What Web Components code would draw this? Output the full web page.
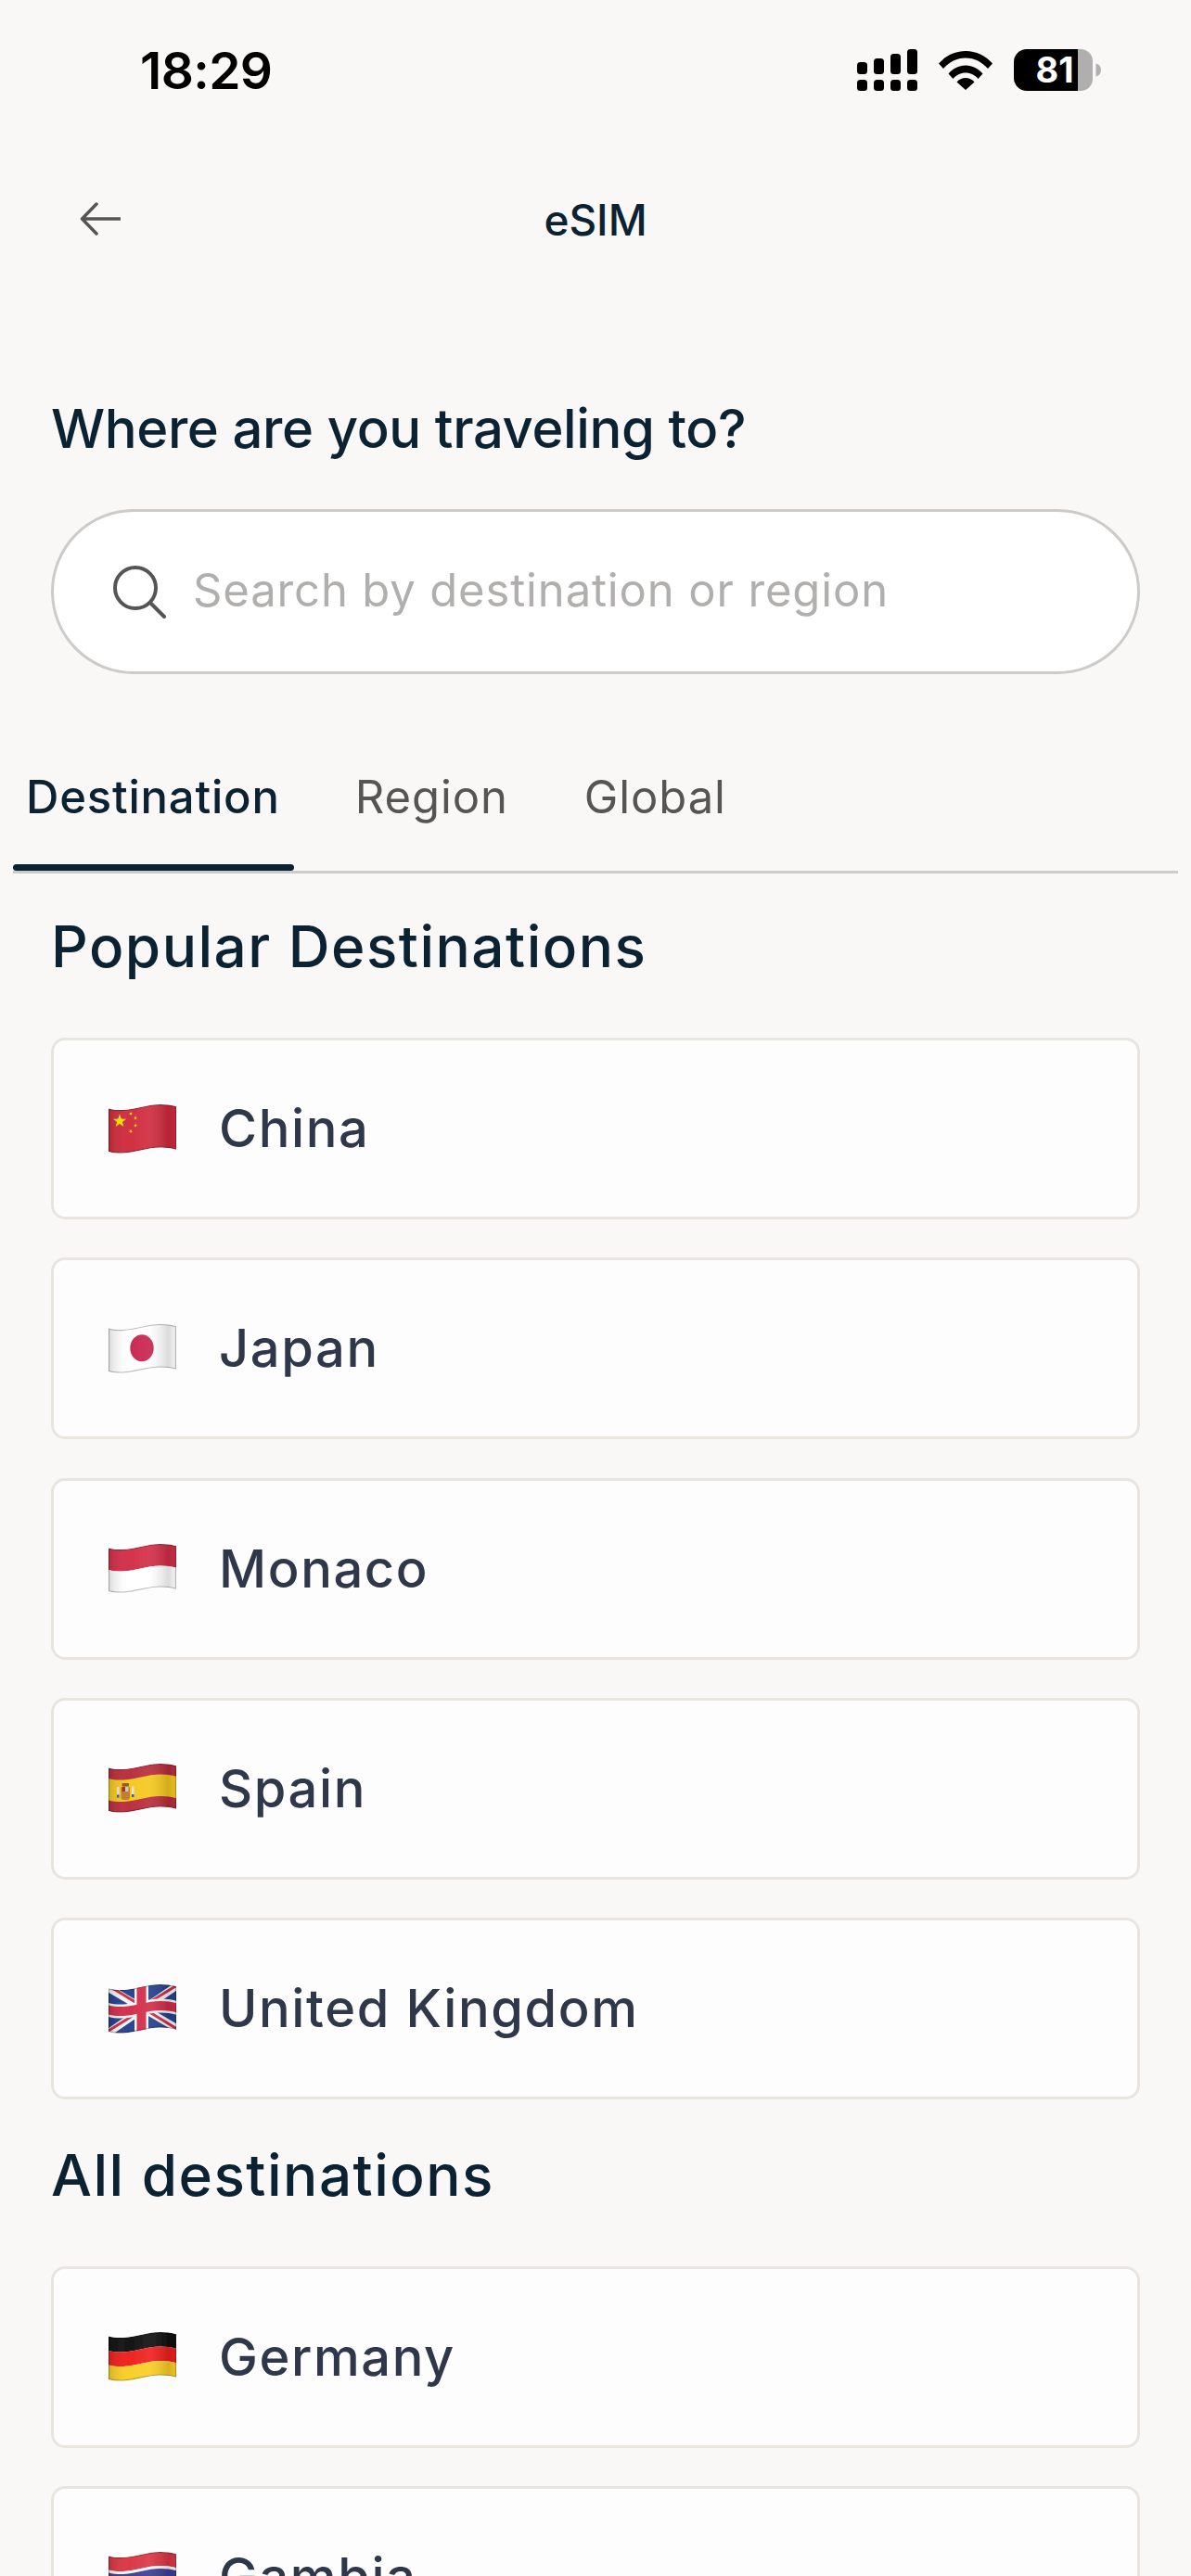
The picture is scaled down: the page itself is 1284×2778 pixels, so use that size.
<!DOCTYPE html>
<html>
<head>
<meta charset="utf-8">
<style>
  html, body { margin: 0; padding: 0; background: #f9f8f6; }
  body { width: 1284px; height: 2778px; overflow: hidden; font-family: Inter, "Liberation Sans", sans-serif; }
</style>
</head>
<body>
<esim-screen>
  <status-bar></status-bar>
  <nav-bar title="eSIM"></nav-bar>
  <search-box heading="Where are you traveling to?" placeholder="Search by destination or region"></search-box>
  <tab-strip></tab-strip>
  <destination-list heading="Popular Destinations">
    <destination-row code="cn" name="China"></destination-row>
    <destination-row code="jp" name="Japan"></destination-row>
    <destination-row code="mc" name="Monaco"></destination-row>
    <destination-row code="es" name="Spain"></destination-row>
    <destination-row code="gb" name="United Kingdom"></destination-row>
  </destination-list>
  <destination-list heading="All destinations" class="all">
    <destination-row code="de" name="Germany"></destination-row>
    <destination-row code="gm" name="Gambia"></destination-row>
  </destination-list>
</esim-screen>

<script>
class EsimScreen extends HTMLElement {
  constructor() {
    super();
    this.attachShadow({ mode: 'open' }).innerHTML = `
      <style>
        :host { display: flex; flex-direction: column; height: 2778px; overflow: hidden; background: #f9f8f6; }
        ::slotted(*) { flex: none; }
      </style>
      <slot></slot>`;
  }
}

class StatusBar extends HTMLElement {
  constructor() {
    super();
    this.attachShadow({ mode: 'open' }).innerHTML = `
      <style>
        :host { display: flex; align-items: center; justify-content: space-between; height: 151px; padding: 0 97px 0 151px; box-sizing: border-box; }
        .time { font: 600 55px Inter, sans-serif; color: #000; letter-spacing: -0.6px; }
        .icons { display: flex; align-items: center; gap: 23px; }
        svg { display: block; }
        text { font: 700 38px Inter, sans-serif; fill: #fff; }
      </style>
      <span class="time">18:29</span>
      <div class="icons">
        <svg width="65" height="45" viewBox="0 0 65 45" fill="#000">
          <rect x="0" y="33" width="11" height="12" rx="3.5"/><rect x="18" y="33" width="11" height="12" rx="3.5"/>
          <rect x="36" y="33" width="11" height="12" rx="3.5"/><rect x="54" y="33" width="11" height="12" rx="3.5"/>
          <rect x="0" y="14" width="11" height="13" rx="3.5"/><rect x="18" y="10" width="11" height="17" rx="3.5"/>
          <rect x="36" y="5" width="11" height="22" rx="3.5"/><rect x="54" y="0" width="11" height="27" rx="3.5"/>
        </svg>
        <svg width="58" height="43" viewBox="0 0 58 43" fill="#000">
          <path d="M0 14.5C7.5 6 17.8 1 29 1s21.5 5 29 13.5l-5 5.5C46.700 12.800 38.300 8.500 29 8.500S11.300 12.800 5 20z"/>
          <path d="M10.500 25.500C15.200 20 21.700 16.500 29 16.500s13.800 3.500 18.500 9l-5 5.500C39.200 27 34.400 24.500 29 24.500S18.800 27 15.500 31z"/>
          <path d="M19.500 34.500C22 31.700 25.300 30 29 30s7 1.700 9.500 4.500L29 43z"/>
        </svg>
        <svg width="94" height="45" viewBox="0 0 94 45">
          <path d="M14 0H69V45H14A14 14 0 0 1 0 31V14A14 14 0 0 1 14 0Z" fill="#000"/>
          <path d="M69 0H72A13 13 0 0 1 85 13V32A13 13 0 0 1 72 45H69Z" fill="#b0aeae"/>
          <path d="M88.500 15.500C92 16.500 94 19 94 22.500S92 28.500 88.500 29.500Z" fill="#b0aeae"/>
          <text x="44" y="36" text-anchor="middle">81</text>
        </svg>
      </div>`;
  }
}

class NavBar extends HTMLElement {
  constructor() {
    super();
    this.attachShadow({ mode: 'open' }).innerHTML = `
      <style>
        :host { display: flex; align-items: center; justify-content: center; position: relative; height: 172px; }
        svg { position: absolute; left: 86px; top: 67px; }
        span { font: 500 46px Inter, sans-serif; color: #0b2233; }
      </style>
      <svg width="44" height="36" viewBox="0 0 44 36" fill="none" stroke="#555" stroke-width="3.500" stroke-linecap="round" stroke-linejoin="round">
        <path d="M43 18H3M18 2L2.500 18L18 34"/>
      </svg>
      <span>${this.getAttribute('title')}</span>`;
  }
}

class SearchBox extends HTMLElement {
  constructor() {
    super();
    this.attachShadow({ mode: 'open' }).innerHTML = `
      <style>
        :host { display: block; padding: 103px 55px 0; }
        h2 { margin: 0 0 50px; font: 500 58px/73px Inter, sans-serif; color: #0b2233; letter-spacing: -0.4px; }
        .field { display: flex; align-items: center; gap: 29px; height: 178px; box-sizing: border-box; padding-left: 63px; border: 3px solid #cdcbca; border-radius: 89px; background: #fff; }
        svg { flex: none; }
        span { font: 400 49px Inter, sans-serif; color: #b0afad; letter-spacing: 0.85px; margin-top: -3px; }
      </style>
      <h2>${this.getAttribute('heading')}</h2>
      <div class="field">
        <svg width="58" height="58" viewBox="0 0 58 58" fill="none" stroke="#555" stroke-width="4" stroke-linecap="round">
          <circle cx="25" cy="25" r="22"/><path d="M41 41L56 56"/>
        </svg>
        <span>${this.getAttribute('placeholder')}</span>
      </div>`;
  }
}

class TabStrip extends HTMLElement {
  constructor() {
    super();
    this.attachShadow({ mode: 'open' }).innerHTML = `
      <style>
        :host { display: flex; margin: 0 14px; height: 215px; box-sizing: border-box; }
        .line { display: flex; align-items: flex-end; width: 100%; height: 215px; border-bottom: 3px solid #cdcbca; box-sizing: border-box; gap: 50px; }
        .tab { position: relative; height: 109px; padding: 0 16px; font: 400 49px Inter, sans-serif; color: #555; letter-spacing: 0.9px; }
        .tab.on { color: #0b2233; font-weight: 500; letter-spacing: 0.8px; padding: 0 15px 0 14px; }
        .tab.on::after { content: ""; position: absolute; left: 0; right: 0; bottom: 0; height: 7px; border-radius: 4px; background: #0b2233; }
      </style>
      <div class="line">
        <div class="tab on">Destination</div>
        <div class="tab">Region</div>
        <div class="tab">Global</div>
      </div>`;
  }
}

class DestinationList extends HTMLElement {
  constructor() {
    super();
    this.attachShadow({ mode: 'open' }).innerHTML = `
      <style>
        :host { display: block; padding: 0 55px; }
        h3 { margin: 0; height: 177px; box-sizing: border-box; padding-top: 42px; font: 500 62px/73px Inter, sans-serif; color: #0b2233; letter-spacing: 1.5px; }
        :host(.all) h3 { height: 179.500px; padding-top: 45px; }
        .rows { display: flex; flex-direction: column; gap: 41.300px; }
      </style>
      <h3>${this.getAttribute('heading')}</h3>
      <div class="rows"><slot></slot></div>`;
  }
}

// the flag wave: a top edge that is shifted down to get each stripe
const wave = (a, b) =>
  `M0 ${4.5 + a}C5 ${5.7 + a} 10 ${6.3 + a} 16 ${6 + a}C30 ${5 + a} 42 ${a} 56 ${a}C62 ${a} 68 ${0.8 + a} 73 ${2.2 + a}` +
  `L73 ${2.2 + b}C68 ${0.8 + b} 62 ${b} 56 ${b}C42 ${b} 30 ${5 + b} 16 ${6 + b}C10 ${6.3 + b} 5 ${5.7 + b} 0 ${4.5 + b}Z`;

const star = (cx, cy, r, rot = 0) => {
  let pts = [];
  for (let i = 0; i < 10; i++) {
    const rad = i % 2 ? r * 0.4 : r;
    const ang = (rot - 90 + i * 36) * Math.PI / 180;
    pts.push((cx + rad * Math.cos(ang)).toFixed(2) + ',' + (cy + rad * Math.sin(ang)).toFixed(2));
  }
  return `<polygon points="${pts.join(' ')}" fill="#f4e300"/>`;
};

const FLAGS = {
  cn: `<path d="${wave(0, 46.500)}" fill="#cf2c3e"/>` + star(12, 18, 7.500) + star(24, 10, 2.200, 20) + star(29, 14.700, 2.200, 40) + star(29, 22.700, 2.200, 10) + star(24, 29, 2.200, 30),
  jp: `<path d="${wave(0, 46.500)}" fill="#fff"/><ellipse cx="36" cy="25.700" rx="12.700" ry="14.500" fill="#c92550"/>`,
  mc: `<path d="${wave(0, 23.500)}" fill="#d32f48"/><path d="${wave(23.500, 46.500)}" fill="#fff"/>`,
  es: `<path d="${wave(0, 46.500)}" fill="#b92d3c"/><path d="${wave(11.500, 35)}" fill="#f4c81f"/>
       <rect x="13.500" y="24" width="9.500" height="15" rx="3" fill="#c27a2e"/><rect x="14.500" y="21" width="7.500" height="3" rx="1" fill="#8a5a22"/>
       <rect x="14.500" y="25" width="3.500" height="5" fill="#a5261f"/><rect x="18" y="25" width="3.500" height="5" fill="#cfc7c0"/>
       <rect x="9" y="25" width="2.500" height="11" fill="#e8e4dc"/><rect x="25" y="24.500" width="2.500" height="11" fill="#e8e4dc"/>
       <rect x="9" y="33.500" width="2.500" height="3" fill="#2a5a9a"/><rect x="25" y="33" width="2.500" height="3" fill="#2a5a9a"/>`,
  gb: `<path d="${wave(0, 46.500)}" fill="#25418f"/>
       <path d="M0 4L73 47M73 2L0 52" stroke="#f5f5f5" stroke-width="8" fill="none"/>
       <path d="M0 1.500L32 21M41 28L73 47.500M73 1.500L41 21M32 30L0 50" stroke="#cf2c46" stroke-width="2.800" fill="none"/>
       <path d="${wave(15.500, 30.500)}" fill="#f5f5f5"/><rect x="28" y="0" width="15" height="53" fill="#f5f5f5"/>
       <path d="${wave(18, 28)}" fill="#d32d48"/><rect x="30.500" y="0" width="10" height="53" fill="#d32d48"/>`,
  de: `<path d="${wave(0, 15.500)}" fill="#111"/><path d="${wave(15.500, 31)}" fill="#f0201f"/><path d="${wave(31, 46.500)}" fill="#f9ce27"/>`,
  gm: `<path d="${wave(0, 15)}" fill="#d93644"/><path d="${wave(15, 18)}" fill="#f7f7f7"/><path d="${wave(18, 30)}" fill="#3a3f94"/><path d="${wave(30, 33)}" fill="#f7f7f7"/><path d="${wave(33, 46.500)}" fill="#2f9a45"/>`
};

class FlagIcon extends HTMLElement {
  constructor() {
    super();
    const code = this.getAttribute('code');
    this.attachShadow({ mode: 'open' }).innerHTML = `
      <style>
        :host { display: block; width: 73px; height: 53px; flex: none; }
        svg { display: block; }
      </style>
      <svg width="73" height="53" viewBox="0 0 73 53">
        <defs>
          <linearGradient id="shade-${code}" x1="0" x2="1" y1="0" y2="0">
            <stop offset="0" stop-color="#000" stop-opacity=".14"/>
            <stop offset=".3" stop-color="#fff" stop-opacity=".02"/>
            <stop offset=".6" stop-color="#fff" stop-opacity=".08"/>
            <stop offset=".88" stop-color="#000" stop-opacity=".14"/>
            <stop offset="1" stop-color="#000" stop-opacity=".05"/>
          </linearGradient>
          <clipPath id="clip-${code}"><path d="${wave(0, 46.500)}"/></clipPath>
          <filter id="soft-${code}" x="-5%" y="-5%" width="110%" height="110%"><feGaussianBlur stdDeviation=".35"/></filter>
        </defs>
        <g filter="url(#soft-${code})">
          <g clip-path="url(#clip-${code})">
            ${FLAGS[code]}
            <path d="${wave(0, 46.500)}" fill="url(#shade-${code})"/>
            <path d="${wave(0, 46.500)}" fill="none" stroke="#000" stroke-opacity=".26" stroke-width="2.200"/>
          </g>
        </g>
      </svg>`;
  }
}

class DestinationRow extends HTMLElement {
  constructor() {
    super();
    this.attachShadow({ mode: 'open' }).innerHTML = `
      <style>
        :host { display: flex; align-items: center; gap: 46px; height: 196px; flex: none; box-sizing: border-box; padding-left: 59px; background: #fdfdfd; border: 3px solid #e8e5e1; border-radius: 15px; }
        span { font: 500 56px Inter, sans-serif; color: #2f374a; letter-spacing: 1.6px; }
      </style>
      <flag-icon code="${this.getAttribute('code')}"></flag-icon>
      <span>${this.getAttribute('name')}</span>`;
  }
}

customElements.define('flag-icon', FlagIcon);
customElements.define('destination-row', DestinationRow);
customElements.define('destination-list', DestinationList);
customElements.define('tab-strip', TabStrip);
customElements.define('search-box', SearchBox);
customElements.define('nav-bar', NavBar);
customElements.define('status-bar', StatusBar);
customElements.define('esim-screen', EsimScreen);
</script>
</body>
</html>
